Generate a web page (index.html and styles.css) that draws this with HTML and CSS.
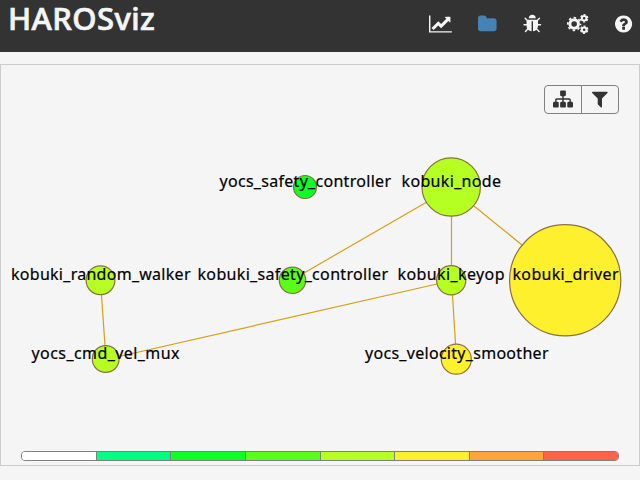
FILE: index.html
```html
<!DOCTYPE html>
<html lang="en">
<head>
<meta charset="utf-8">
<title>HAROSviz</title>
<link rel="stylesheet" href="styles.css">
</head>
<body>
<header class="topbar">
  <h1 class="brand">HAROSviz</h1>
  <nav class="nav">
    <svg class="icon" viewBox="0 0 2048 1792"><path d="M2048 1536v128H0V128h128v1408h1920zm-128-1248v435q0 21-19.500 29.500T1865 745l-121-121-633 633q-10 10-23 10t-23-10l-233-233-416 416-192-192 585-585q10-10 23-10t23 10l233 233 464-464-121-121q-16-16-7.500-35.500T1585 256h303q14 0 23 9t9 23z"/></svg>
    <svg class="icon icon-active" viewBox="64 0 1664 1792"><path d="M1728 608v704q0 92-66 158t-158 66h-1216q-92 0-158-66t-66-158v-960q0-92 66-158t158-66h320q92 0 158 66t66 158v32h672q92 0 158 66t66 158z"/></svg>
    <svg class="icon" viewBox="64 0 1664 1792"><path d="M1696 960q0 26-19 45t-45 19h-224q0 171-67 290l208 209q19 19 19 45t-19 45q-18 19-45 19t-45-19l-198-197q-5 5-15 13t-42 28.500-65 36.500-82 29-97 13v-896h-128v896q-51 0-101.500-13.500t-87-33-66-39-43.500-32.500l-15-14-183 207q-20 21-48 21-24 0-43-16-19-18-20.500-44.500t15.500-46.500l202-227q-58-114-58-274h-224q-26 0-45-19t-19-45 19-45 45-19h224v-294l-173-173q-19-19-19-45t19-45 45-19 45 19l173 173h844l173-173q19-19 45-19t45 19 19 45-19 45l-173 173v294h224q26 0 45 19t19 45zm-480-576h-640q0-133 93.500-226.500t226.500-93.500 226.500 93.500 93.500 226.500z"/></svg>
    <svg class="icon" viewBox="0 0 1920 1792">
      <g class="gear">
        <circle cx="640" cy="896" r="385" stroke-width="270"/>
        <circle cx="640" cy="896" r="570" stroke-width="150" pathLength="80" stroke-dasharray="5 5" stroke-dashoffset="2.500"/>
        <circle cx="1536" cy="384" r="205" stroke-width="180"/>
        <circle cx="1536" cy="384" r="325" stroke-width="110" pathLength="60" stroke-dasharray="5.600 4.400" stroke-dashoffset="7.800"/>
        <circle cx="1536" cy="1408" r="205" stroke-width="180"/>
        <circle cx="1536" cy="1408" r="325" stroke-width="110" pathLength="60" stroke-dasharray="5.600 4.400" stroke-dashoffset="7.800"/>
      </g>
    </svg>
    <svg class="icon" viewBox="128 0 1536 1792"><path d="M1024 1376v-192q0-14-9-23t-23-9h-192q-14 0-23 9t-9 23v192q0 14 9 23t23 9h192q14 0 23-9t9-23zm256-672q0-88-55.500-163t-138.500-116-170-41q-243 0-371 213-15 24 8 42l132 100q7 6 19 6 16 0 25-12 53-68 86-92 34-24 86-24 48 0 85.500 26t37.500 59q0 38-20 61t-68 45q-63 28-115.500 86.500t-52.500 125.500v36q0 14 9 23t23 9h192q14 0 23-9t9-23q0-19 21.500-49.500t54.500-49.500q32-18 49-28.500t46-35 44.500-48 28-60.500 12.500-81zm384 192q0 209-103 385.500t-279.500 279.500-385.500 103-385.500-103-279.500-279.500-103-385.500 103-385.500 279.500-279.500 385.500-103 385.500 103 279.500 279.500 103 385.500z"/></svg>
  </nav>
</header>
<main class="panel">
  <svg class="graph" viewBox="1 65 638 386">
    <g class="links">
      <path d="M426 202.500L304 273M451.500 216V265M474 206L522 245M101.500 295L105 346M437 284L119 356.500M452.500 295L455.500 344"/>
    </g>
    <g class="nodes">
      <circle class="green" cx="305" cy="187" r="11.500"/>
      <circle class="lime" cx="451.200" cy="187" r="29.200"/>
      <circle class="lime" cx="100.500" cy="280.300" r="14.400"/>
      <circle class="leaf" cx="292.500" cy="280.300" r="13.200"/>
      <circle class="lime" cx="451.200" cy="280.300" r="14.600"/>
      <circle class="yellow" cx="565.200" cy="280.300" r="55.600"/>
      <circle class="lime" cx="105.700" cy="359" r="13.400"/>
      <circle class="yellow" cx="456.300" cy="359.200" r="15"/>
    </g>
    <g class="labels">
      <text x="219.500" y="187" textLength="171.500">yocs_safety_controller</text>
      <text x="401.500" y="187" textLength="99.500">kobuki_node</text>
      <text x="11" y="280" textLength="179.500">kobuki_random_walker</text>
      <text x="197.500" y="280" textLength="190.500">kobuki_safety_controller</text>
      <text x="397.500" y="280" textLength="107">kobuki_keyop</text>
      <text x="512.500" y="280" textLength="106">kobuki_driver</text>
      <text x="31.500" y="359" textLength="148">yocs_cmd_vel_mux</text>
      <text x="365" y="359" textLength="183.500">yocs_velocity_smoother</text>
    </g>
  </svg>
  <div class="legend">
    <span class="s0"></span><span class="s1"></span><span class="s2"></span><span class="s3"></span><span class="s4"></span><span class="s5"></span><span class="s6"></span><span class="s7"></span>
  </div>
  <div class="tools">
    <button aria-label="Layout"><svg class="icon" viewBox="0 0 1792 1792"><path d="M1792 1248v320q0 40-28 68t-68 28h-320q-40 0-68-28t-28-68v-320q0-40 28-68t68-28h96v-192h-512v192h96q40 0 68 28t28 68v320q0 40-28 68t-68 28h-320q-40 0-68-28t-28-68v-320q0-40 28-68t68-28h96v-192h-512v192h96q40 0 68 28t28 68v320q0 40-28 68t-68 28h-320q-40 0-68-28t-28-68v-320q0-40 28-68t68-28h96v-192q0-52 38-90t90-38h512v-192h-96q-40 0-68-28t-28-68v-320q0-40 28-68t68-28h320q40 0 68 28t28 68v320q0 40-28 68t-68 28h-96v192h512q52 0 90 38t38 90v192h96q40 0 68 28t28 68z"/></svg></button>
    <button aria-label="Filter"><svg class="icon" viewBox="192 0 1408 1792"><path d="M1595 295q17 41-14 70l-493 493v742q0 42-39 59-13 5-25 5-27 0-45-19l-256-256q-19-19-19-45v-486l-493-493q-31-29-14-70 17-39 59-39h1280q42 0 59 39z"/></svg></button>
  </div>
</main>
</body>
</html>
```
FILE: styles.css
```css
* { box-sizing: border-box; }
body {
  margin: 0;
  height: 480px;
  overflow: hidden;
  background: #f5f5f5;
  color: #333;
  font-family: "Noto Sans", "Open Sans", sans-serif;
}
.topbar {
  display: flex;
  justify-content: space-between;
  align-items: flex-start;
  height: 52px;
  padding: 0 8px;
  background: #333;
  color: #f5f5f5;
}
.brand {
  margin: -3px 0 0;
  font-size: 31px;
  line-height: 43px;
  font-weight: 500;
  letter-spacing: 0.4px;
  -webkit-text-stroke: 0.7px #f5f5f5;
}
.nav {
  display: flex;
  gap: 26.1px;
  padding-top: 13.5px;
}
.icon { display: block; height: 20px; fill: currentColor; overflow: visible; }
.icon-active { color: #4682b4; }
.gear { fill: none; stroke: currentColor; }
.panel {
  position: relative;
  height: 402px;
  margin-top: 12px;
  border: 1px solid #ccc;
}
.graph { display: block; width: 638px; height: 386px; }
.links { fill: none; stroke: #d4a017; stroke-width: 1.2; }
.nodes { stroke: #8b7040; stroke-width: 1.2; }
.green { fill: #0dff25; }
.leaf { fill: #59ff19; }
.lime { fill: #b6ff22; }
.yellow { fill: #fff02e; }
.labels { fill: #000; stroke: #000; stroke-width: 0.2; font-size: 16px; }
.legend {
  display: flex;
  height: 10px;
  margin: 0 20px;
  border: 1px solid #808080;
  border-radius: 4px;
  overflow: hidden;
}
.legend span { flex: 1; }
.legend span + span { border-left: 1px solid #808080; }
.s0 { background: #fff; }
.s1 { background: #00ff80; }
.s2 { background: #0dff25; }
.s3 { background: #59ff19; }
.s4 { background: #b6ff22; }
.s5 { background: #fff02e; }
.s6 { background: #ffa53c; }
.s7 { background: #ff6347; }
.tools {
  position: absolute;
  top: 20px;
  right: 20px;
  display: flex;
  width: 75px;
  height: 29px;
  border: 1px solid #808080;
  border-radius: 4px;
}
.tools button {
  display: flex;
  flex: 1;
  align-items: center;
  justify-content: center;
  padding: 0 0 2px;
  border: 0;
  background: none;
  color: #333;
}
.tools button + button { border-left: 1px solid #808080; }
```
